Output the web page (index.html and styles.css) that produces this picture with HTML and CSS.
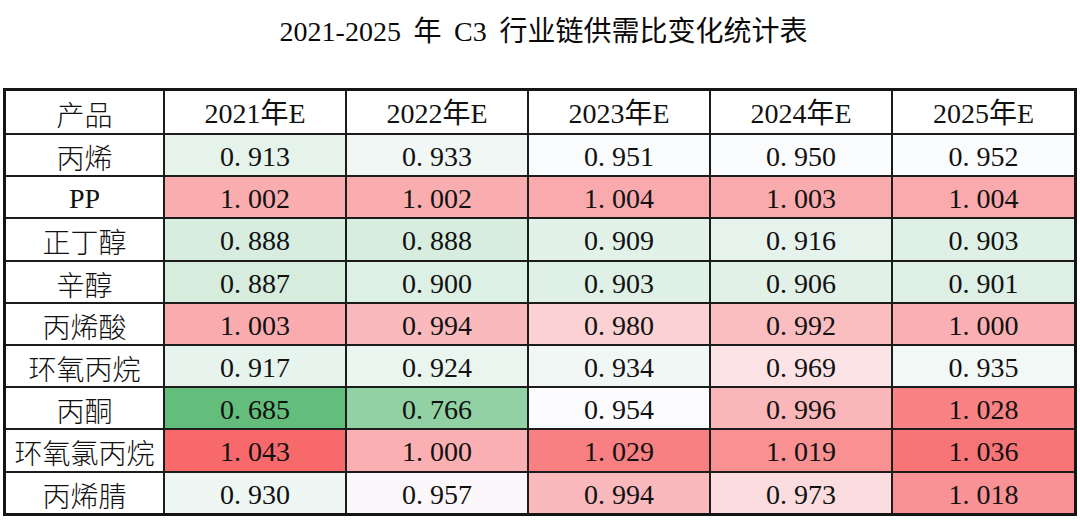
FILE: index.html
```html
<!DOCTYPE html>
<html lang="zh-CN">
<head>
<meta charset="utf-8">
<title>2021-2025 年 C3 行业链供需比变化统计表</title>
<link rel="stylesheet" href="styles.css">
</head>
<body>
<div class="page">
  <h1 class="title">2021-2025 年 C3 行业链供需比变化统计表</h1>
  <table class="ratio-table">
    <colgroup>
      <col class="c-name"><col class="c-val"><col class="c-val"><col class="c-val"><col class="c-val"><col class="c-last">
    </colgroup>
    <thead>
      <tr><th class="name">产品</th><th>2021年E</th><th>2022年E</th><th>2023年E</th><th>2024年E</th><th>2025年E</th></tr>
    </thead>
    <tbody>
      <tr><th class="name">丙烯</th>
        <td style="background:rgb(229,243,235)">0<span class="pt">.</span>913</td>
        <td style="background:rgb(240,247,245)">0<span class="pt">.</span>933</td>
        <td style="background:rgb(250,251,253)">0<span class="pt">.</span>951</td>
        <td style="background:rgb(250,251,253)">0<span class="pt">.</span>950</td>
        <td style="background:rgb(251,252,254)">0<span class="pt">.</span>952</td></tr>
      <tr><th class="name latin">PP</th>
        <td style="background:rgb(250,173,175)">1<span class="pt">.</span>002</td>
        <td style="background:rgb(250,173,175)">1<span class="pt">.</span>002</td>
        <td style="background:rgb(250,169,172)">1<span class="pt">.</span>004</td>
        <td style="background:rgb(250,171,174)">1<span class="pt">.</span>003</td>
        <td style="background:rgb(250,169,172)">1<span class="pt">.</span>004</td></tr>
      <tr><th class="name">正丁醇</th>
        <td style="background:rgb(214,237,223)">0<span class="pt">.</span>888</td>
        <td style="background:rgb(214,237,223)">0<span class="pt">.</span>888</td>
        <td style="background:rgb(226,242,233)">0<span class="pt">.</span>909</td>
        <td style="background:rgb(230,243,236)">0<span class="pt">.</span>916</td>
        <td style="background:rgb(223,240,230)">0<span class="pt">.</span>903</td></tr>
      <tr><th class="name">辛醇</th>
        <td style="background:rgb(214,237,222)">0<span class="pt">.</span>887</td>
        <td style="background:rgb(221,240,229)">0<span class="pt">.</span>900</td>
        <td style="background:rgb(223,240,230)">0<span class="pt">.</span>903</td>
        <td style="background:rgb(225,241,232)">0<span class="pt">.</span>906</td>
        <td style="background:rgb(222,240,229)">0<span class="pt">.</span>901</td></tr>
      <tr><th class="name">丙烯酸</th>
        <td style="background:rgb(250,171,174)">1<span class="pt">.</span>003</td>
        <td style="background:rgb(250,186,189)">0<span class="pt">.</span>994</td>
        <td style="background:rgb(251,209,212)">0<span class="pt">.</span>980</td>
        <td style="background:rgb(250,189,192)">0<span class="pt">.</span>992</td>
        <td style="background:rgb(250,176,179)">1<span class="pt">.</span>000</td></tr>
      <tr><th class="name">环氧丙烷</th>
        <td style="background:rgb(231,243,237)">0<span class="pt">.</span>917</td>
        <td style="background:rgb(235,245,240)">0<span class="pt">.</span>924</td>
        <td style="background:rgb(241,247,245)">0<span class="pt">.</span>934</td>
        <td style="background:rgb(251,227,230)">0<span class="pt">.</span>969</td>
        <td style="background:rgb(241,248,246)">0<span class="pt">.</span>935</td></tr>
      <tr><th class="name">丙酮</th>
        <td style="background:rgb(99,190,123)">0<span class="pt">.</span>685</td>
        <td style="background:rgb(145,209,163)">0<span class="pt">.</span>766</td>
        <td style="background:rgb(252,252,255)">0<span class="pt">.</span>954</td>
        <td style="background:rgb(250,183,185)">0<span class="pt">.</span>996</td>
        <td style="background:rgb(249,130,132)">1<span class="pt">.</span>028</td></tr>
      <tr><th class="name">环氧氯丙烷</th>
        <td style="background:rgb(248,105,107)">1<span class="pt">.</span>043</td>
        <td style="background:rgb(250,176,179)">1<span class="pt">.</span>000</td>
        <td style="background:rgb(249,128,130)">1<span class="pt">.</span>029</td>
        <td style="background:rgb(249,145,147)">1<span class="pt">.</span>019</td>
        <td style="background:rgb(248,117,119)">1<span class="pt">.</span>036</td></tr>
      <tr><th class="name">丙烯腈</th>
        <td style="background:rgb(238,247,243)">0<span class="pt">.</span>930</td>
        <td style="background:rgb(252,247,250)">0<span class="pt">.</span>957</td>
        <td style="background:rgb(250,186,189)">0<span class="pt">.</span>994</td>
        <td style="background:rgb(251,221,223)">0<span class="pt">.</span>973</td>
        <td style="background:rgb(249,146,149)">1<span class="pt">.</span>018</td></tr>
    </tbody>
  </table>
</div>
</body>
</html>
```
FILE: styles.css
```css
html, body {
  margin: 0;
  padding: 0;
  background: #ffffff;
}

.page {
  width: 1080px;
  height: 520px;
  overflow: hidden;
  font-family: "Liberation Serif", "Noto Sans CJK SC", serif;
  color: #111111;
}

.title {
  margin: 0;
  height: 64px;
  line-height: 64px;
  text-align: center;
  font-size: 28px;
  font-weight: 400;
  word-spacing: 0.2em;
  padding-left: 7px;
  color: #0a0a0a;
}

.ratio-table {
  margin: 24px 0 0 3px;
  width: 1074px;
  table-layout: fixed;
  border-collapse: collapse;
  border: 3px solid #151515;
}

.c-name { width: 159.5px; }
.c-val { width: 182px; }
.c-last { width: 183.5px; }

.ratio-table th,
.ratio-table td {
  border: 2px solid #1c1c1c;
  padding: 4px 0 0 0;
  text-align: center;
  vertical-align: middle;
  font-size: 28px;
  font-weight: 400;
  line-height: 30px;
  white-space: nowrap;
  background: #ffffff;
}

.ratio-table thead th {
  height: 38px;
}

.ratio-table tbody th,
.ratio-table tbody td {
  height: 36.2px;
}

.ratio-table .name {
  font-family: "Noto Sans CJK SC", sans-serif;
  font-weight: 300;
}

.ratio-table .name.latin {
  font-family: "Liberation Serif", serif;
  font-weight: 400;
}

.pt {
  display: inline-block;
  width: 0.5em;
  text-align: left;
}
```
